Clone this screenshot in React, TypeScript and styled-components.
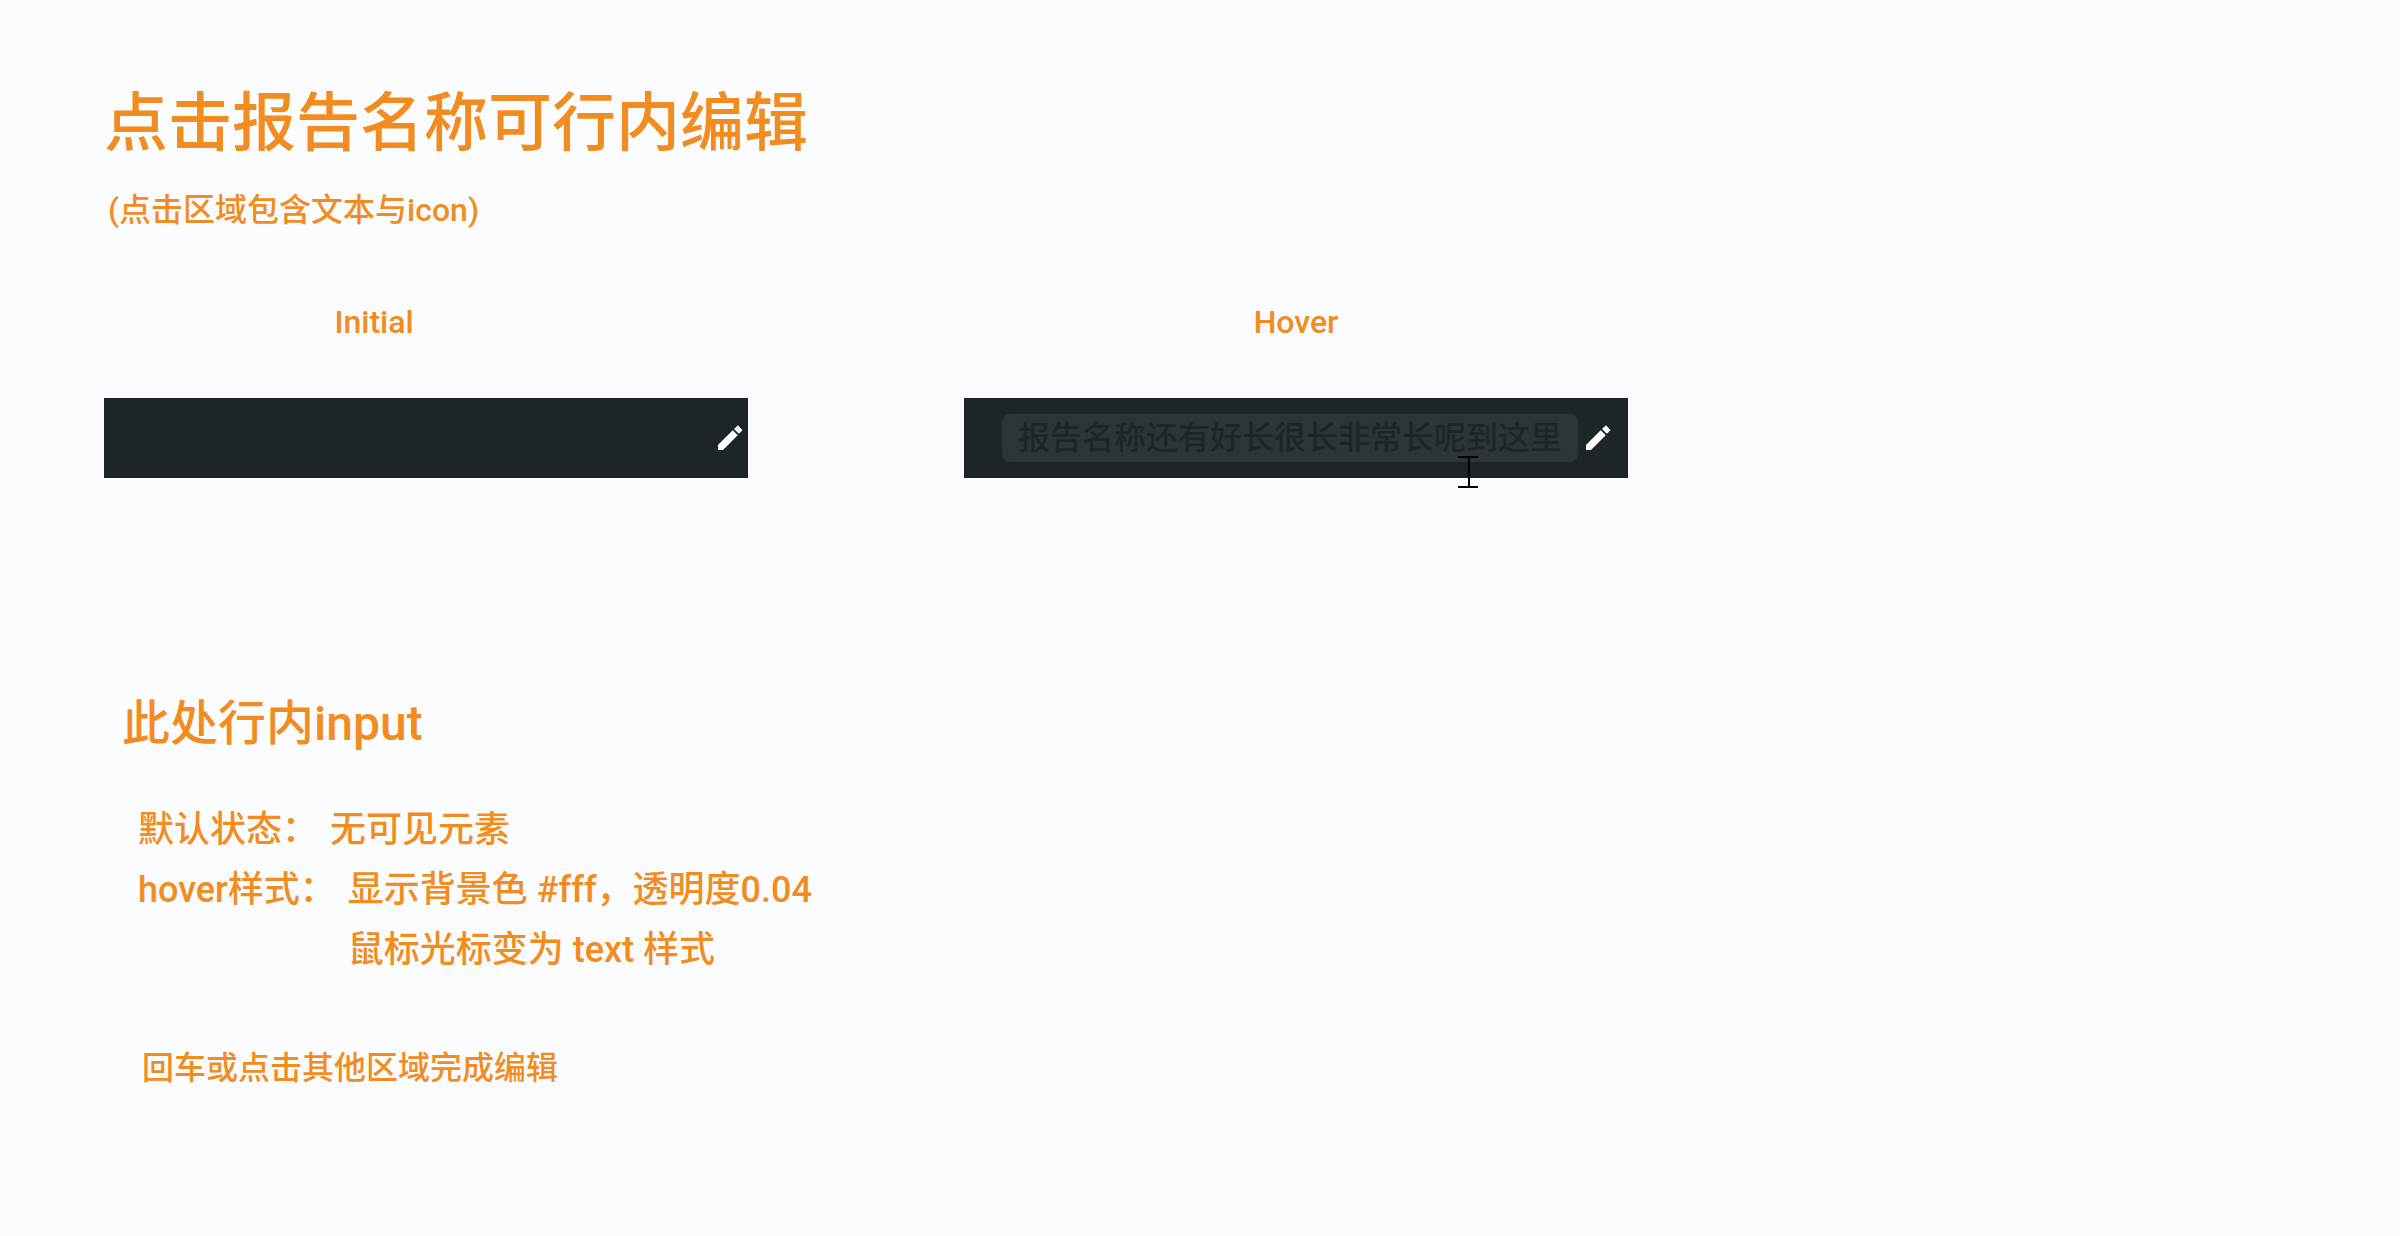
import React from 'react';
import styled, { createGlobalStyle } from 'styled-components';

const GlobalStyle = createGlobalStyle`
  * {
    box-sizing: border-box;
  }

  body {
    margin: 0;
    background: #fafcff;
    color: #f28c1e;
    font-family: Roboto, "Noto Sans CJK SC", sans-serif;
    font-weight: 500;
  }
`;

const Page = styled.main`
  padding: 80px 104px;
`;

const Title = styled.h1`
  margin: 0;
  font-size: 64px;
  line-height: 88px;
  font-weight: 500;
`;

const Subtitle = styled.p`
  margin: 18px 0 0;
  padding-left: 4px;
  font-size: 32px;
  line-height: 48px;
`;

const States = styled.section`
  display: grid;
  grid-template-columns: minmax(0, 644px) minmax(0, 664px);
  column-gap: 216px;
  margin-top: 64px;
`;

const State = styled.div`
  display: flex;
  flex-direction: column;
  gap: 52px;
`;

const StateLabel = styled.label<{ $inset?: number }>`
  padding-right: ${({ $inset = 0 }) => $inset}px;
  font-size: 32px;
  line-height: 48px;
  text-align: center;
`;

const Bar = styled.div<{ $left: number; $right: number }>`
  position: relative;
  display: flex;
  align-items: center;
  gap: 4px;
  height: 80px;
  padding: 0 ${({ $right }) => $right}px 0 ${({ $left }) => $left}px;
  background: #1e2528;
`;

const NameInput = styled.input<{ $hovered?: boolean }>`
  flex: 1;
  min-width: 0;
  height: 48px;
  padding: 0 16px;
  border: 0;
  border-radius: 8px;
  outline: 0;
  background: ${({ $hovered }) => ($hovered ? 'rgba(255, 255, 255, 0.07)' : 'transparent')};
  color: #1e2528;
  font: inherit;
  font-size: 32px;
  line-height: 48px;
  cursor: text;
`;

const EditButton = styled.button`
  display: flex;
  padding: 0;
  border: 0;
  background: none;
  color: #fff;
  cursor: pointer;
`;

const TextCursor = styled.svg`
  position: absolute;
  top: 58px;
  right: 150px;
`;

const Notes = styled.section`
  margin-top: 210px;
`;

const NotesTitle = styled.h2`
  margin: 0;
  padding-left: 18px;
  font-size: 48px;
  line-height: 72px;
  font-weight: 500;
`;

const Rules = styled.dl`
  margin: 40px 0 0;
  padding-left: 34px;
  font-size: 36px;
  line-height: 60px;
`;

const Rule = styled.div`
  display: flex;
  gap: 12px;
`;

const RuleValue = styled.dd`
  margin: 0;
`;

const Footnote = styled.p`
  margin: 64px 0 0;
  padding-left: 38px;
  font-size: 32px;
  line-height: 48px;
`;

const Pencil = () => (
  <svg width="32" height="32" viewBox="0 0 24 24" fill="currentColor" aria-hidden="true">
    <path d="M3 17.25V21h3.75L17.81 9.94l-3.75-3.75L3 17.25zM18 2.5l3.4 3.6-2.8 2.8-3.6-3.6L18 2.5z" />
  </svg>
);

export default function App() {
  return (
    <>
      <GlobalStyle />
      <Page lang="zh-CN">
        <Title>点击报告名称可行内编辑</Title>
        <Subtitle>(点击区域包含文本与icon)</Subtitle>

        <States>
          <State>
            <StateLabel htmlFor="name-initial" $inset={104}>Initial</StateLabel>
            <Bar $left={30} $right={2}>
              <NameInput id="name-initial" type="text" />
              <EditButton type="button" aria-label="编辑">
                <Pencil />
              </EditButton>
            </Bar>
          </State>
          <State>
            <StateLabel htmlFor="name-hover">Hover</StateLabel>
            <Bar $left={38} $right={14}>
              <NameInput
                id="name-hover"
                type="text"
                $hovered
                defaultValue="报告名称还有好长很长非常长呢到这里"
              />
              <EditButton type="button" aria-label="编辑">
                <Pencil />
              </EditButton>
              <TextCursor width="20" height="32" viewBox="0 0 20 32" aria-hidden="true">
                <path d="M0 1h20M11 1v30M0 31h20" stroke="#000" strokeWidth="2" fill="none" />
              </TextCursor>
            </Bar>
          </State>
        </States>

        <Notes>
          <NotesTitle>此处行内input</NotesTitle>
          <Rules>
            <Rule>
              <dt>默认状态：</dt>
              <RuleValue>无可见元素</RuleValue>
            </Rule>
            <Rule>
              <dt>hover样式：</dt>
              <RuleValue>
                显示背景色 #fff，透明度0.04
                <br />
                鼠标光标变为 text 样式
              </RuleValue>
            </Rule>
          </Rules>
          <Footnote>回车或点击其他区域完成编辑</Footnote>
        </Notes>
      </Page>
    </>
  );
}
